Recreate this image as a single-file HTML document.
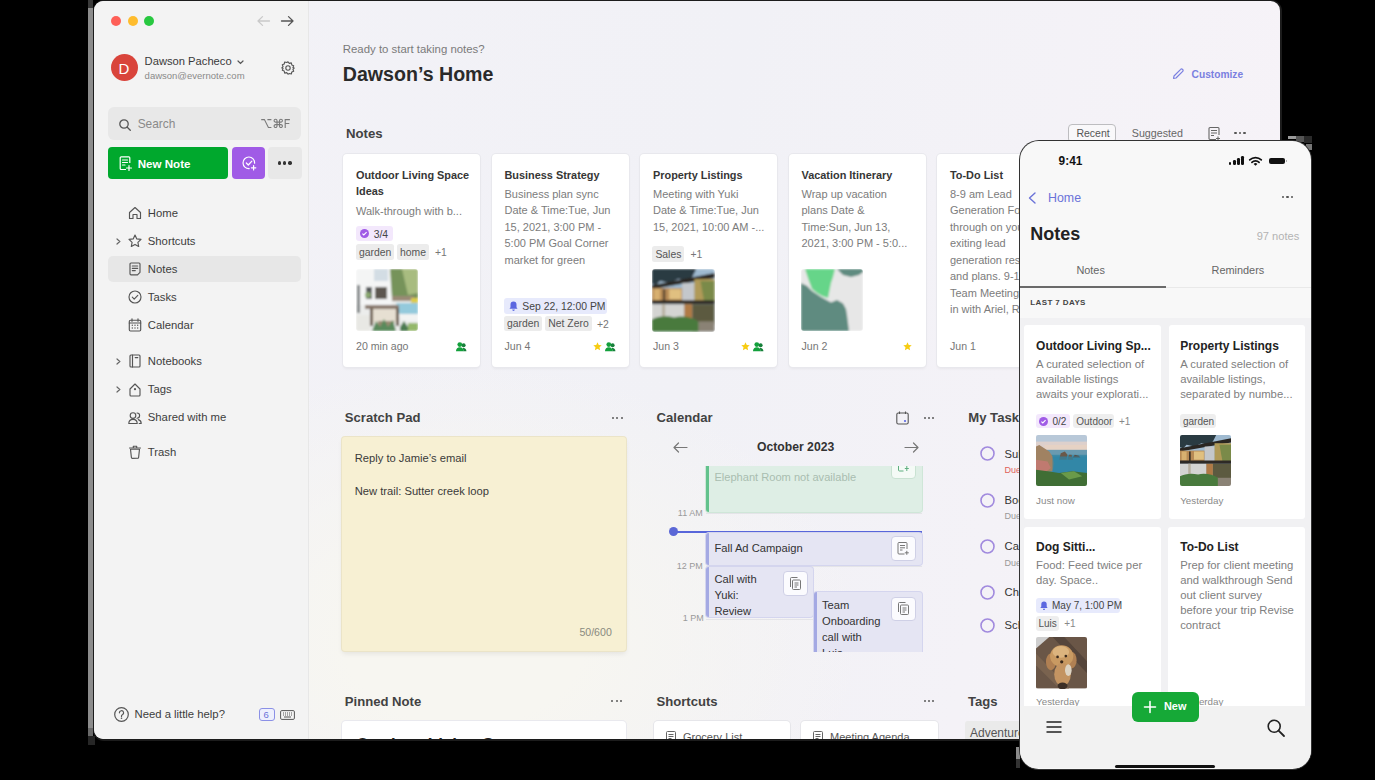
<!DOCTYPE html><html><head><meta charset="utf-8"><style>
*{margin:0;padding:0;box-sizing:border-box}
html,body{width:1375px;height:780px;overflow:hidden;background:#000}
body{position:relative;font-family:"Liberation Sans",sans-serif}
.a{position:absolute;white-space:nowrap}
svg.a{overflow:visible}
</style></head><body>

<div class="a" style="left:88.00px;top:0.00px;width:5.00px;height:8.00px;background:#3a3a3a"></div>
<div class="a" style="left:88.00px;top:8.00px;width:5.00px;height:720.00px;background:#8c8c8c"></div>
<div class="a" style="left:88.00px;top:728.00px;width:5.00px;height:8.00px;background:#6a6a6a"></div>
<div class="a" style="left:88.00px;top:736.00px;width:7.00px;height:9.00px;background:#262626"></div>
<div class="a" style="left:92.50px;top:-0.50px;width:1189.00px;height:741.00px;background:#1c1c1c;border-radius:11px"></div>
<div class="a" style="left:94.00px;top:1.00px;width:1186.00px;height:738.00px;border-radius:9.5px;background:radial-gradient(ellipse 400px 280px at 370px 640px,rgba(247,246,241,1) 30%,rgba(247,246,241,0)),linear-gradient(100deg,#f3f2f7 0%,#f1f1f6 50%,#f7f3f8 100%)"></div>
<div class="a" style="left:94.00px;top:1.00px;width:215.00px;height:738.00px;border-radius:9.5px 0 0 9.5px;background:#f3f3f3;border-right:1px solid #e7e7e7"></div>
<div class="a" style="left:0;top:0;width:1375px;height:739px;overflow:hidden">
<div class="a" style="left:111.10px;top:15.80px;width:10.20px;height:10.20px;border-radius:50%;background:#fe5f57"></div>
<div class="a" style="left:127.60px;top:15.80px;width:10.20px;height:10.20px;border-radius:50%;background:#febc2e"></div>
<div class="a" style="left:144.00px;top:15.80px;width:10.20px;height:10.20px;border-radius:50%;background:#28c840"></div>
<svg class="a" style="left:257.00px;top:16.00px;" width="13" height="10" viewBox="0 0 13 10"><path d="M12.5 5H1M5.5 0.6L1 5L5.5 9.4" stroke="#c9c9c9" stroke-width="1.3" fill="none" stroke-linecap="round" stroke-linejoin="round"/></svg>
<svg class="a" style="left:281.00px;top:16.00px;" width="13" height="10" viewBox="0 0 13 10"><path d="M0.5 5H12M7.5 0.6L12 5L7.5 9.4" stroke="#555" stroke-width="1.3" fill="none" stroke-linecap="round" stroke-linejoin="round"/></svg>
<div class="a" style="left:110.80px;top:53.80px;width:27.50px;height:27.50px;border-radius:50%;background:#d9443b"></div>
<div class="a" style="left:118.60px;top:60.50px;font-size:15px;line-height:15px;font-weight:400;color:#fff;">D</div>
<div class="a" style="left:144.60px;top:55.52px;font-size:11.2px;line-height:11.2px;font-weight:400;color:#3a3a3a;">Dawson Pacheco</div>
<svg class="a" style="left:236.50px;top:59.50px;" width="7" height="5" viewBox="0 0 7 5"><path d="M1 1L3.5 3.5L6 1" stroke="#555" stroke-width="1.2" fill="none" stroke-linecap="round"/></svg>
<div class="a" style="left:144.60px;top:70.76px;font-size:9.5px;line-height:9.5px;font-weight:400;color:#8a8a8a;">dawson@evernote.com</div>
<svg class="a" style="left:280.50px;top:61.00px;" width="14" height="14" viewBox="0 0 14 14"><g fill="none" stroke="#555" stroke-width="1.1"><path d="M7 0.8l1.3 1.6 2-.5.5 2 1.9.8-.8 1.9L13.2 7l-1.3 1.3.8 1.9-1.9.8-.5 2-2-.5L7 13.2l-1.3-1.6-2 .5-.5-2-1.9-.8.8-1.9L.8 7l1.3-1.3-.8-1.9 1.9-.8.5-2 2 .5z" stroke-linejoin="round"/><circle cx="7" cy="7" r="2.2"/></g></svg>
<div class="a" style="left:108.00px;top:107.00px;width:193.00px;height:33.00px;background:#e8e8e8;border-radius:6px"></div>
<svg class="a" style="left:118.50px;top:118.50px;" width="12" height="12" viewBox="0 0 12 12"><g fill="none" stroke="#555" stroke-width="1.3"><circle cx="5" cy="5" r="4.2"/><path d="M8 8L11.3 11.3" stroke-linecap="round"/></g></svg>
<div class="a" style="left:137.70px;top:118.73px;font-size:11.9px;line-height:11.9px;font-weight:400;color:#8a8a8a;">Search</div>
<svg class="a" style="left:261.00px;top:119.00px;" width="30" height="10" viewBox="0 0 30 10"><g fill="none" stroke="#7a7a7a" stroke-width="1.1"><path d="M0.2 0.6H3.4L7.4 8.5H10.4M6.4 0.6H10.4"/><path transform="translate(13,0.1)" d="M3 3V1.6A1.45 1.45 0 1 0 1.6 3H6.9A1.45 1.45 0 1 0 5.5 1.6V6.9A1.45 1.45 0 1 0 6.9 5.5H1.6A1.45 1.45 0 1 0 3 6.9Z"/><path d="M24.2 9V0.6H28.9M24.2 4.5H28.3"/></g></svg>
<div class="a" style="left:108.00px;top:147.00px;width:120.00px;height:32.40px;background:#00a82d;border-radius:4px"></div>
<svg class="a" style="left:119.00px;top:156.00px;" width="13" height="15" viewBox="0 0 13 15"><g fill="none" stroke="#fff" stroke-width="1.2"><path d="M7 13.5H2.2a1 1 0 0 1-1-1V1.8a1 1 0 0 1 1-1h7.6a1 1 0 0 1 1 1V7"/><path d="M3.5 4h5M3.5 6.5h5M3.5 9h2.5" stroke-linecap="round"/><path d="M10 9.5v5M7.5 12h5" stroke-linecap="round"/></g></svg>
<div class="a" style="left:137.70px;top:158.08px;font-size:11.6px;line-height:11.6px;font-weight:700;color:#fff;">New Note</div>
<div class="a" style="left:232.00px;top:147.00px;width:32.60px;height:32.40px;background:#a05be6;border-radius:4px"></div>
<svg class="a" style="left:240.50px;top:155.00px;" width="16" height="16" viewBox="0 0 16 16"><g fill="none" stroke="#fff" stroke-width="1.2" stroke-linecap="round" stroke-linejoin="round"><path d="M13.6 8.2A5.8 5.8 0 1 0 8.2 13.6"/><path d="M5.3 8l2 2 3.6-3.9"/><path d="M12.6 10.6v4.4M10.4 12.8h4.4"/></g></svg>
<div class="a" style="left:268.00px;top:147.00px;width:33.70px;height:32.40px;background:#e8e8e8;border-radius:4px"></div>
<div class="a" style="left:277.90px;top:161.40px;width:3.40px;height:3.40px;border-radius:50%;background:#333"></div>
<div class="a" style="left:283.10px;top:161.40px;width:3.40px;height:3.40px;border-radius:50%;background:#333"></div>
<div class="a" style="left:288.30px;top:161.40px;width:3.40px;height:3.40px;border-radius:50%;background:#333"></div>
<div class="a" style="left:108.00px;top:256.00px;width:193.00px;height:25.50px;background:#e7e7e7;border-radius:5px"></div>
<div class="a" style="left:147.80px;top:207.53px;font-size:11.3px;line-height:11.3px;font-weight:400;color:#3d3d3d;">Home</div>
<svg class="a" style="left:127.50px;top:206.00px;" width="14" height="14" viewBox="0 0 14 14"><path fill="none" stroke="#555" stroke-width="1.15" stroke-linejoin="round" stroke-linecap="round" d="M1.5 6.5L7 1.5L12.5 6.5V12.5H9V8.5H5V12.5H1.5Z"/></svg>
<div class="a" style="left:147.80px;top:235.53px;font-size:11.3px;line-height:11.3px;font-weight:400;color:#3d3d3d;">Shortcuts</div>
<svg class="a" style="left:127.50px;top:234.00px;" width="14" height="14" viewBox="0 0 14 14"><path fill="none" stroke="#555" stroke-width="1.15" stroke-linejoin="round" stroke-linecap="round" d="M7 1l1.8 3.9 4.2.5-3.1 2.9.8 4.2L7 10.4l-3.7 2.1.8-4.2L1 5.4l4.2-.5z"/></svg>
<svg class="a" style="left:115.80px;top:237.50px;" width="5" height="7" viewBox="0 0 5 7"><path d="M1 1L3.8 3.5L1 6" stroke="#666" stroke-width="1.2" fill="none" stroke-linecap="round"/></svg>
<div class="a" style="left:147.80px;top:263.53px;font-size:11.3px;line-height:11.3px;font-weight:400;color:#3d3d3d;">Notes</div>
<svg class="a" style="left:127.50px;top:262.00px;" width="14" height="14" viewBox="0 0 14 14"><g fill="none" stroke="#555" stroke-width="1.15" stroke-linejoin="round" stroke-linecap="round"><path d="M9.5 12.8H3a1 1 0 0 1-1-1V2a1 1 0 0 1 1-1h8a1 1 0 0 1 1 1v8.3z"/><path d="M4.3 4h5.4M4.3 6.3h5.4M4.3 8.6h3"/></g></svg>
<div class="a" style="left:147.80px;top:291.53px;font-size:11.3px;line-height:11.3px;font-weight:400;color:#3d3d3d;">Tasks</div>
<svg class="a" style="left:127.50px;top:290.00px;" width="14" height="14" viewBox="0 0 14 14"><g fill="none" stroke="#555" stroke-width="1.15" stroke-linejoin="round" stroke-linecap="round"><circle cx="7" cy="7" r="6"/><path d="M4.3 7.2l1.9 1.9 3.6-3.8"/></g></svg>
<div class="a" style="left:147.80px;top:319.53px;font-size:11.3px;line-height:11.3px;font-weight:400;color:#3d3d3d;">Calendar</div>
<svg class="a" style="left:127.50px;top:318.00px;" width="14" height="14" viewBox="0 0 14 14"><g fill="none" stroke="#555" stroke-width="1.15" stroke-linejoin="round" stroke-linecap="round"><rect x="1.3" y="2.2" width="11.4" height="10.8" rx="1.2"/><path d="M4 0.8v2.5M10 0.8v2.5M1.3 5h11.4"/></g><g fill="#555"><circle cx="4.3" cy="7.3" r=".7"/><circle cx="7" cy="7.3" r=".7"/><circle cx="9.7" cy="7.3" r=".7"/><circle cx="4.3" cy="10" r=".7"/><circle cx="7" cy="10" r=".7"/><circle cx="9.7" cy="10" r=".7"/></g></svg>
<div class="a" style="left:147.80px;top:355.53px;font-size:11.3px;line-height:11.3px;font-weight:400;color:#3d3d3d;">Notebooks</div>
<svg class="a" style="left:127.50px;top:354.00px;" width="14" height="14" viewBox="0 0 14 14"><g fill="none" stroke="#555" stroke-width="1.15" stroke-linejoin="round" stroke-linecap="round"><rect x="2" y="1" width="10" height="12" rx="1"/><path d="M4.5 1v12M7.2 3.6h2.6"/></g></svg>
<svg class="a" style="left:115.80px;top:357.50px;" width="5" height="7" viewBox="0 0 5 7"><path d="M1 1L3.8 3.5L1 6" stroke="#666" stroke-width="1.2" fill="none" stroke-linecap="round"/></svg>
<div class="a" style="left:147.80px;top:384.13px;font-size:11.3px;line-height:11.3px;font-weight:400;color:#3d3d3d;">Tags</div>
<svg class="a" style="left:127.50px;top:382.60px;" width="14" height="14" viewBox="0 0 14 14"><g fill="none" stroke="#555" stroke-width="1.15" stroke-linejoin="round" stroke-linecap="round"><path d="M2 6L7 1L12 6V12a1 1 0 0 1-1 1H3a1 1 0 0 1-1-1Z"/></g><circle cx="7" cy="6.2" r="1.1" fill="#555"/></svg>
<svg class="a" style="left:115.80px;top:386.10px;" width="5" height="7" viewBox="0 0 5 7"><path d="M1 1L3.8 3.5L1 6" stroke="#666" stroke-width="1.2" fill="none" stroke-linecap="round"/></svg>
<div class="a" style="left:147.80px;top:412.03px;font-size:11.3px;line-height:11.3px;font-weight:400;color:#3d3d3d;">Shared with me</div>
<svg class="a" style="left:127.50px;top:410.50px;" width="14" height="14" viewBox="0 0 14 14"><g fill="none" stroke="#555" stroke-width="1.15" stroke-linejoin="round" stroke-linecap="round"><circle cx="5" cy="4.5" r="2.8"/><path d="M0.8 12.5c0-2.5 1.8-4.2 4.2-4.2s4.2 1.7 4.2 4.2z"/><path d="M9 2a2.6 2.6 0 0 1 0 5.2M10.3 8.6c1.7.5 2.9 1.8 2.9 3.9h-2"/></g></svg>
<div class="a" style="left:147.80px;top:446.53px;font-size:11.3px;line-height:11.3px;font-weight:400;color:#3d3d3d;">Trash</div>
<svg class="a" style="left:127.50px;top:445.00px;" width="14" height="14" viewBox="0 0 14 14"><g fill="none" stroke="#555" stroke-width="1.15" stroke-linejoin="round" stroke-linecap="round"><path d="M2.5 4.2h9l-.9 8.3a.9.9 0 0 1-.9.8H4.3a.9.9 0 0 1-.9-.8z"/><path d="M1.5 3h11M5.3 3V1.2h3.4V3"/></g></svg>
<svg class="a" style="left:113.80px;top:707.00px;" width="15" height="15" viewBox="0 0 15 15"><circle cx="7.5" cy="7.5" r="6.8" fill="none" stroke="#555" stroke-width="1.2"/><path d="M5.4 5.8a2.1 2.1 0 1 1 3 1.9c-.6.3-.9.7-.9 1.4v.5" fill="none" stroke="#555" stroke-width="1.2" stroke-linecap="round"/><circle cx="7.5" cy="11.3" r=".8" fill="#555"/></svg>
<div class="a" style="left:134.50px;top:709.03px;font-size:11.3px;line-height:11.3px;font-weight:400;color:#3d3d3d;">Need a little help?</div>
<div class="a" style="left:258.50px;top:708.40px;width:16.10px;height:12.30px;border:1px solid #8b90e6;border-radius:3px;background:#eef0fd"></div>
<div class="a" style="left:263.60px;top:710.16px;font-size:9.5px;line-height:9.5px;font-weight:400;color:#6b72d8;">6</div>
<svg class="a" style="left:280.30px;top:709.70px;" width="15" height="10" viewBox="0 0 15 10"><rect x=".6" y=".6" width="13.8" height="8.8" rx="1.2" fill="none" stroke="#555" stroke-width="1"/><path d="M3 3h1M5 3h1M7 3h1M9 3h1M11 3h1M3 5h1M5 5h1M7 5h1M9 5h1M11 5h1M4 7h7" stroke="#555" stroke-width="1"/></svg>
<div class="a" style="left:342.80px;top:43.95px;font-size:11.4px;line-height:11.4px;font-weight:400;color:#7a7a7a;">Ready to start taking notes?</div>
<div class="a" style="left:342.80px;top:65.21px;font-size:19.6px;line-height:19.6px;font-weight:700;color:#2a2a2a;">Dawson’s Home</div>
<svg class="a" style="left:1172.00px;top:68.00px;" width="12" height="12" viewBox="0 0 12 12"><path d="M1.5 10.5L2 8L8.7 1.3a1.2 1.2 0 0 1 1.8 0l.2.2a1.2 1.2 0 0 1 0 1.8L4 10z" fill="none" stroke="#7a7fe0" stroke-width="1.2" stroke-linejoin="round"/></svg>
<div class="a" style="left:1191.60px;top:70.07px;font-size:10.2px;line-height:10.2px;font-weight:700;color:#7a7fe0;">Customize</div>
<div class="a" style="left:346.00px;top:126.83px;font-size:13.2px;line-height:13.2px;font-weight:700;color:#424242;">Notes</div>
<div class="a" style="left:1068.00px;top:123.60px;width:48.00px;height:19.00px;border:1px solid #bdbdc0;border-radius:4px;background:#f9f8fa"></div>
<div class="a" style="left:1076.40px;top:128.31px;font-size:10.5px;line-height:10.5px;font-weight:400;color:#555;">Recent</div>
<div class="a" style="left:1131.80px;top:128.14px;font-size:10.7px;line-height:10.7px;font-weight:400;color:#666;">Suggested</div>
<svg class="a" style="left:1207.60px;top:127.00px;" width="13" height="14" viewBox="0 0 13 14"><g fill="none" stroke="#666" stroke-width="1.1"><path d="M8 12.5H2a1 1 0 0 1-1-1V1.5a1 1 0 0 1 1-1h8a1 1 0 0 1 1 1V8"/><path d="M3 3.5h6M3 6h6M3 8.5h3M10 9.5v4M8 11.5h4"/></g></svg>
<div class="a" style="left:1234.20px;top:131.70px;width:2.60px;height:2.60px;border-radius:50%;background:#555"></div>
<div class="a" style="left:1238.80px;top:131.70px;width:2.60px;height:2.60px;border-radius:50%;background:#555"></div>
<div class="a" style="left:1243.40px;top:131.70px;width:2.60px;height:2.60px;border-radius:50%;background:#555"></div>
<div class="a" style="left:343.00px;top:154.00px;width:137.00px;height:213.00px;background:#fff;border-radius:4px;box-shadow:0 0 0 1px #e8e8ed,0 2px 3px rgba(0,0,0,.05)"></div>
<div class="a" style="left:491.50px;top:154.00px;width:137.00px;height:213.00px;background:#fff;border-radius:4px;box-shadow:0 0 0 1px #e8e8ed,0 2px 3px rgba(0,0,0,.05)"></div>
<div class="a" style="left:640.00px;top:154.00px;width:137.00px;height:213.00px;background:#fff;border-radius:4px;box-shadow:0 0 0 1px #e8e8ed,0 2px 3px rgba(0,0,0,.05)"></div>
<div class="a" style="left:788.50px;top:154.00px;width:137.00px;height:213.00px;background:#fff;border-radius:4px;box-shadow:0 0 0 1px #e8e8ed,0 2px 3px rgba(0,0,0,.05)"></div>
<div class="a" style="left:937.00px;top:154.00px;width:137.00px;height:213.00px;background:#fff;border-radius:4px;box-shadow:0 0 0 1px #e8e8ed,0 2px 3px rgba(0,0,0,.05)"></div>
<div class="a" style="left:356.00px;top:169.77px;font-size:10.9px;line-height:10.9px;font-weight:700;color:#363636;">Outdoor Living Space</div>
<div class="a" style="left:356.00px;top:186.27px;font-size:10.9px;line-height:10.9px;font-weight:700;color:#363636;">Ideas</div>
<div class="a" style="left:356.00px;top:205.69px;font-size:11px;line-height:11px;font-weight:400;color:#7c7c7c;">Walk-through with b...</div>
<div class="a" style="left:356.00px;top:226.00px;width:37.40px;height:15.00px;background:#f3e8fc;border-radius:3px"></div>
<svg class="a" style="left:360.00px;top:229.00px;" width="9" height="9" viewBox="0 0 9 9"><circle cx="4.5" cy="4.5" r="4.5" fill="#a05be6"/><path d="M2.4 4.6l1.4 1.4 2.8-2.8" stroke="#fff" stroke-width="1.1" fill="none"/></svg>
<div class="a" style="left:373.70px;top:229.60px;font-size:10.4px;line-height:10.4px;font-weight:400;color:#444;">3/4</div>
<div class="a" style="left:356.00px;top:243.80px;width:38.30px;height:16.20px;background:#ececec;border-radius:2.5px"></div>
<div class="a" style="left:359.00px;top:247.80px;font-size:10.4px;line-height:10.4px;font-weight:400;color:#555;">garden</div>
<div class="a" style="left:397.00px;top:243.80px;width:32.40px;height:16.20px;background:#ececec;border-radius:2.5px"></div>
<div class="a" style="left:400.00px;top:247.80px;font-size:10.4px;line-height:10.4px;font-weight:400;color:#555;">home</div>
<div class="a" style="left:435.00px;top:247.50px;font-size:10.4px;line-height:10.4px;font-weight:400;color:#777;">+1</div>
<svg class="a" style="left:356.00px;top:269.00px;overflow:hidden;border-radius:3px" width="62" height="62" viewBox="0 0 62 62"><defs><filter id="bl1" x="-5%" y="-5%" width="110%" height="110%"><feGaussianBlur stdDeviation="0.9"/></filter></defs><g filter="url(#bl1)"><rect width="62" height="62" fill="#ecedec"/><rect x="0" y="0" width="36" height="36" fill="#f4f5f5"/><rect x="18" y="0" width="14" height="12" fill="#d3dde4"/><rect x="1" y="16" width="3" height="28" fill="#7c8082"/><rect x="10" y="18" width="6" height="12" fill="#55585a"/><rect x="19" y="18" width="12" height="12" fill="#5c5650"/><circle cx="12" cy="26" r="3" fill="#8aa870"/><path d="M34 0H62V30H36Z" fill="#76935a"/><path d="M46 0H62V24L52 26Z" fill="#a8bc80"/><rect x="36" y="27" width="22" height="5" fill="#9a8a76"/><rect x="55" y="29" width="7" height="6" fill="#dccc4a"/><path d="M40 34H62V46H44Z" fill="#94cadc"/><path d="M42 45H62V52H46Z" fill="#f2f3f2"/><rect x="9" y="36" width="34" height="4" fill="#8a7a6e"/><rect x="16" y="40" width="26" height="14" fill="#e6dfd2"/><rect x="14" y="39" width="3" height="18" fill="#6a5a4c"/><rect x="40" y="39" width="3" height="18" fill="#6a5a4c"/><rect x="22" y="52" width="16" height="8" fill="#9a8a72"/><path d="M16 62L20 52 24 58 28 50 32 58 37 51 40 62Z" fill="#5a8a5c"/><path d="M44 58L48 52 52 58 54 62H44Z" fill="#4c7a50"/><rect x="52" y="54" width="10" height="8" fill="#94b86a"/><rect x="0" y="46" width="14" height="16" fill="#e8e8e4"/></g></svg>
<div class="a" style="left:356.00px;top:341.03px;font-size:10.6px;line-height:10.6px;font-weight:400;color:#767676;">20 min ago</div>
<svg class="a" style="left:456.30px;top:342.00px;" width="11" height="9.5" viewBox="0 0 11 9.5"><circle cx="7.6" cy="3.3" r="2" fill="#17803a"/><path d="M6.8 5.8C8.8 5.8 10.4 7 10.4 9.2H7.5Z" fill="#17803a"/><circle cx="3.8" cy="2.6" r="2.4" fill="#13a03c"/><path d="M0 9.2C0 6.6 1.6 5.2 3.8 5.2S7.6 6.6 7.6 9.2Z" fill="#13a03c"/></svg>
<div class="a" style="left:504.50px;top:169.77px;font-size:10.9px;line-height:10.9px;font-weight:700;color:#363636;">Business Strategy</div>
<div class="a" style="left:504.50px;top:188.69px;font-size:11px;line-height:11px;font-weight:400;color:#7c7c7c;">Business plan sync</div>
<div class="a" style="left:504.50px;top:205.19px;font-size:11px;line-height:11px;font-weight:400;color:#7c7c7c;">Date &amp; Time:Tue, Jun</div>
<div class="a" style="left:504.50px;top:221.69px;font-size:11px;line-height:11px;font-weight:400;color:#7c7c7c;">15, 2021, 3:00 PM -</div>
<div class="a" style="left:504.50px;top:238.19px;font-size:11px;line-height:11px;font-weight:400;color:#7c7c7c;">5:00 PM Goal Corner</div>
<div class="a" style="left:504.50px;top:254.69px;font-size:11px;line-height:11px;font-weight:400;color:#7c7c7c;">market for green</div>
<div class="a" style="left:504.00px;top:297.80px;width:103.30px;height:15.90px;background:#e7eafc;border-radius:3px"></div>
<svg class="a" style="left:508.50px;top:301.00px;" width="9" height="10" viewBox="0 0 9 10"><path d="M4.5 .6a3 3 0 0 1 3 3v2.7l1 1.5H.5l1-1.5V3.6a3 3 0 0 1 3-3z M3.2 8.6a1.3 1.3 0 0 0 2.6 0z" fill="#5b67e0"/></svg>
<div class="a" style="left:522.30px;top:301.50px;font-size:10.4px;line-height:10.4px;font-weight:400;color:#444;">Sep 22, 12:00 PM</div>
<div class="a" style="left:504.00px;top:316.00px;width:38.40px;height:15.40px;background:#ececec;border-radius:2.5px"></div>
<div class="a" style="left:507.00px;top:319.20px;font-size:10.4px;line-height:10.4px;font-weight:400;color:#555;">garden</div>
<div class="a" style="left:545.30px;top:316.00px;width:47.20px;height:15.40px;background:#ececec;border-radius:2.5px"></div>
<div class="a" style="left:548.30px;top:319.20px;font-size:10.4px;line-height:10.4px;font-weight:400;color:#555;">Net Zero</div>
<div class="a" style="left:597.00px;top:319.50px;font-size:10.4px;line-height:10.4px;font-weight:400;color:#777;">+2</div>
<div class="a" style="left:504.50px;top:341.03px;font-size:10.6px;line-height:10.6px;font-weight:400;color:#767676;">Jun 4</div>
<svg class="a" style="left:592.70px;top:341.50px;" width="9" height="9" viewBox="0 0 9 9"><path d="M4.5 .3l1.25 2.7 2.95.35-2.2 2 .6 2.95L4.5 6.8 1.9 8.3l.6-2.95-2.2-2 2.95-.35z" fill="#f7cc12"/></svg>
<svg class="a" style="left:605.30px;top:342.00px;" width="11" height="9.5" viewBox="0 0 11 9.5"><circle cx="7.6" cy="3.3" r="2" fill="#17803a"/><path d="M6.8 5.8C8.8 5.8 10.4 7 10.4 9.2H7.5Z" fill="#17803a"/><circle cx="3.8" cy="2.6" r="2.4" fill="#13a03c"/><path d="M0 9.2C0 6.6 1.6 5.2 3.8 5.2S7.6 6.6 7.6 9.2Z" fill="#13a03c"/></svg>
<div class="a" style="left:653.00px;top:169.77px;font-size:10.9px;line-height:10.9px;font-weight:700;color:#363636;">Property Listings</div>
<div class="a" style="left:653.00px;top:188.69px;font-size:11px;line-height:11px;font-weight:400;color:#7c7c7c;">Meeting with Yuki</div>
<div class="a" style="left:653.00px;top:205.19px;font-size:11px;line-height:11px;font-weight:400;color:#7c7c7c;">Date &amp; Time:Tue, Jun</div>
<div class="a" style="left:653.00px;top:221.69px;font-size:11px;line-height:11px;font-weight:400;color:#7c7c7c;">15, 2021, 10:00 AM -...</div>
<div class="a" style="left:652.40px;top:246.00px;width:32.00px;height:16.40px;background:#ececec;border-radius:2.5px"></div>
<div class="a" style="left:655.40px;top:250.20px;font-size:10.4px;line-height:10.4px;font-weight:400;color:#555;">Sales</div>
<div class="a" style="left:690.50px;top:249.80px;font-size:10.4px;line-height:10.4px;font-weight:400;color:#777;">+1</div>
<svg class="a" style="left:652.00px;top:269.00px;overflow:hidden;border-radius:3px" width="62.5" height="62.5" viewBox="0 0 62 62"><defs><filter id="bl2" x="-5%" y="-5%" width="110%" height="110%"><feGaussianBlur stdDeviation="0.9"/></filter></defs><g filter="url(#bl2)"><rect width="62" height="62" fill="#9fbad0"/><path d="M0 0H44L40 8 34 12 26 10 18 14 8 12 4 16 0 15Z" fill="#2c3a42"/><path d="M0 16L62 4V9L0 20Z" fill="#2a2824"/><rect x="0" y="19" width="30" height="13" fill="#b78a55"/><rect x="2" y="20" width="6" height="11" fill="#d8b070"/><rect x="17" y="20" width="12" height="10" fill="#e0c080"/><rect x="11" y="20" width="2" height="12" fill="#3a3026"/><rect x="30" y="14" width="12" height="18" fill="#c4c7cb"/><rect x="42" y="10" width="20" height="22" fill="#b09a58"/><path d="M48 12H62V34H52Z" fill="#7a8a48"/><rect x="0" y="31" width="62" height="4" fill="#2e2a26"/><rect x="0" y="35" width="32" height="16" fill="#d4d4d2"/><rect x="10" y="35" width="3" height="16" fill="#b8b0a0"/><rect x="32" y="35" width="8" height="14" fill="#b07a44"/><rect x="40" y="35" width="22" height="20" fill="#5c5a40"/><rect x="40" y="52" width="22" height="10" fill="#8a8274"/><path d="M0 62V50C6 47 14 46 22 48 30 46 40 48 46 52V62Z" fill="#4a7a3c"/></g></svg>
<div class="a" style="left:653.00px;top:341.03px;font-size:10.6px;line-height:10.6px;font-weight:400;color:#767676;">Jun 3</div>
<svg class="a" style="left:741.20px;top:341.50px;" width="9" height="9" viewBox="0 0 9 9"><path d="M4.5 .3l1.25 2.7 2.95.35-2.2 2 .6 2.95L4.5 6.8 1.9 8.3l.6-2.95-2.2-2 2.95-.35z" fill="#f7cc12"/></svg>
<svg class="a" style="left:752.80px;top:342.00px;" width="11" height="9.5" viewBox="0 0 11 9.5"><circle cx="7.6" cy="3.3" r="2" fill="#17803a"/><path d="M6.8 5.8C8.8 5.8 10.4 7 10.4 9.2H7.5Z" fill="#17803a"/><circle cx="3.8" cy="2.6" r="2.4" fill="#13a03c"/><path d="M0 9.2C0 6.6 1.6 5.2 3.8 5.2S7.6 6.6 7.6 9.2Z" fill="#13a03c"/></svg>
<div class="a" style="left:801.50px;top:169.77px;font-size:10.9px;line-height:10.9px;font-weight:700;color:#363636;">Vacation Itinerary</div>
<div class="a" style="left:801.50px;top:188.69px;font-size:11px;line-height:11px;font-weight:400;color:#7c7c7c;">Wrap up vacation</div>
<div class="a" style="left:801.50px;top:205.19px;font-size:11px;line-height:11px;font-weight:400;color:#7c7c7c;">plans Date &amp;</div>
<div class="a" style="left:801.50px;top:221.69px;font-size:11px;line-height:11px;font-weight:400;color:#7c7c7c;">Time:Sun, Jun 13,</div>
<div class="a" style="left:801.50px;top:238.19px;font-size:11px;line-height:11px;font-weight:400;color:#7c7c7c;">2021, 3:00 PM - 5:0...</div>
<svg class="a" style="left:801.00px;top:269.00px;overflow:hidden;border-radius:3px" width="62" height="62" viewBox="0 0 62 62"><defs><filter id="bl3" x="-5%" y="-5%" width="110%" height="110%"><feGaussianBlur stdDeviation="0.9"/></filter></defs><g filter="url(#bl3)"><rect width="62" height="62" fill="#e7e7e7"/><path d="M0 14L6 17 11 22 20 28 30 33.5 36 31 42 34.5 45 40 46 46 47 54 48 62H0Z" fill="#5e8b80"/><path d="M36 0H62V3L58 6 50 8 42 6Z" fill="#5e8b80"/><path d="M4 0H34L32 8 30 14 29 19 27 29 21 27 16 24 11 20 8 12Z" fill="#66d589"/></g></svg>
<div class="a" style="left:801.50px;top:341.03px;font-size:10.6px;line-height:10.6px;font-weight:400;color:#767676;">Jun 2</div>
<svg class="a" style="left:903.20px;top:341.50px;" width="9" height="9" viewBox="0 0 9 9"><path d="M4.5 .3l1.25 2.7 2.95.35-2.2 2 .6 2.95L4.5 6.8 1.9 8.3l.6-2.95-2.2-2 2.95-.35z" fill="#f7cc12"/></svg>
<div class="a" style="left:950.00px;top:169.77px;font-size:10.9px;line-height:10.9px;font-weight:700;color:#363636;">To-Do List</div>
<div class="a" style="left:950.00px;top:188.69px;font-size:11px;line-height:11px;font-weight:400;color:#7c7c7c;">8-9 am Lead</div>
<div class="a" style="left:950.00px;top:205.19px;font-size:11px;line-height:11px;font-weight:400;color:#7c7c7c;">Generation Follow</div>
<div class="a" style="left:950.00px;top:221.69px;font-size:11px;line-height:11px;font-weight:400;color:#7c7c7c;">through on your</div>
<div class="a" style="left:950.00px;top:238.19px;font-size:11px;line-height:11px;font-weight:400;color:#7c7c7c;">exiting lead</div>
<div class="a" style="left:950.00px;top:254.69px;font-size:11px;line-height:11px;font-weight:400;color:#7c7c7c;">generation research</div>
<div class="a" style="left:950.00px;top:271.19px;font-size:11px;line-height:11px;font-weight:400;color:#7c7c7c;">and plans. 9-10am</div>
<div class="a" style="left:950.00px;top:287.69px;font-size:11px;line-height:11px;font-weight:400;color:#7c7c7c;">Team Meeting</div>
<div class="a" style="left:950.00px;top:304.19px;font-size:11px;line-height:11px;font-weight:400;color:#7c7c7c;">in with Ariel, R</div>
<div class="a" style="left:950.00px;top:341.03px;font-size:10.6px;line-height:10.6px;font-weight:400;color:#767676;">Jun 1</div>
<div class="a" style="left:344.80px;top:411.41px;font-size:13.1px;line-height:13.1px;font-weight:700;color:#424242;">Scratch Pad</div>
<div class="a" style="left:612.00px;top:416.50px;width:2.10px;height:2.10px;border-radius:50%;background:#5a5a5a"></div>
<div class="a" style="left:616.30px;top:416.50px;width:2.10px;height:2.10px;border-radius:50%;background:#5a5a5a"></div>
<div class="a" style="left:620.60px;top:416.50px;width:2.10px;height:2.10px;border-radius:50%;background:#5a5a5a"></div>
<div class="a" style="left:341.60px;top:437.30px;width:284.70px;height:214.10px;background:#f7f0d3;border-radius:3px;box-shadow:0 0 0 1px #ebe4c8,0 3px 5px rgba(0,0,0,.07)"></div>
<div class="a" style="left:354.70px;top:453.22px;font-size:11.2px;line-height:11.2px;font-weight:400;color:#3a3a3a;">Reply to Jamie’s email</div>
<div class="a" style="left:354.70px;top:486.02px;font-size:11.2px;line-height:11.2px;font-weight:400;color:#3a3a3a;">New trail: Sutter creek loop</div>
<div class="a" style="left:579.40px;top:627.03px;font-size:10.6px;line-height:10.6px;font-weight:400;color:#8a8a80;">50/600</div>
<div class="a" style="left:656.60px;top:411.41px;font-size:13.1px;line-height:13.1px;font-weight:700;color:#424242;">Calendar</div>
<div class="a" style="left:923.80px;top:416.50px;width:2.10px;height:2.10px;border-radius:50%;background:#5a5a5a"></div>
<div class="a" style="left:928.10px;top:416.50px;width:2.10px;height:2.10px;border-radius:50%;background:#5a5a5a"></div>
<div class="a" style="left:932.40px;top:416.50px;width:2.10px;height:2.10px;border-radius:50%;background:#5a5a5a"></div>
<svg class="a" style="left:896.00px;top:410.50px;" width="13" height="14" viewBox="0 0 13 14"><g fill="none" stroke="#555" stroke-width="1.1"><rect x=".8" y="2" width="11.4" height="11" rx="1.5"/><path d="M3.5 .5v2.5M9.5 .5v2.5"/></g><circle cx="9" cy="10" r="1.1" fill="#5b67e0"/></svg>
<div class="a" style="left:757.00px;top:441.07px;font-size:12.2px;line-height:12.2px;font-weight:700;color:#333;">October 2023</div>
<svg class="a" style="left:672.50px;top:441.50px;" width="15" height="11" viewBox="0 0 15 11"><path d="M14 5.5H1M5.5 1L1 5.5L5.5 10" stroke="#777" stroke-width="1.2" fill="none" stroke-linecap="round" stroke-linejoin="round"/></svg>
<svg class="a" style="left:904.00px;top:441.50px;" width="15" height="11" viewBox="0 0 15 11"><path d="M1 5.5H14M9.5 1L14 5.5L9.5 10" stroke="#777" stroke-width="1.2" fill="none" stroke-linecap="round" stroke-linejoin="round"/></svg>
<div class="a" style="left:660px;top:465.5px;width:270px;height:186px;overflow:hidden">
<div class="a" style="left:45.60px;top:47.50px;width:216.00px;height:1.00px;background:#e4e4e8"></div>
<div class="a" style="left:45.60px;top:100.50px;width:216.00px;height:1.00px;background:#e4e4e8"></div>
<div class="a" style="left:45.60px;top:153.50px;width:216.00px;height:1.00px;background:#e4e4e8"></div>
<div class="a" style="left:17.80px;top:43.08px;font-size:9px;line-height:9px;font-weight:400;color:#9a9a9a;">11 AM</div>
<div class="a" style="left:16.70px;top:96.08px;font-size:9px;line-height:9px;font-weight:400;color:#9a9a9a;">12 PM</div>
<div class="a" style="left:22.70px;top:148.88px;font-size:9px;line-height:9px;font-weight:400;color:#9a9a9a;">1 PM</div>
<div class="a" style="left:45.60px;top:-25.50px;width:216.10px;height:72.00px;background:#deeee5;border-left:3px solid #62c28c;border-radius:3px;box-shadow:0 0 0 1px #cfe6d8"></div>
<div class="a" style="left:54.40px;top:6.50px;font-size:11.1px;line-height:11.1px;font-weight:400;color:#a9bdb0;">Elephant Room not available</div>
<div class="a" style="left:231.00px;top:-15.50px;width:25.40px;height:29.00px;background:#f4faf6;border:1px solid #c9e2d2;border-radius:4px"></div>
<svg class="a" style="left:237.00px;top:0.50px;" width="13" height="13" viewBox="0 0 13 13"><g fill="none" stroke="#5fae80" stroke-width="1"><path d="M1.5 0V4a1 1 0 0 0 1 1h4"/><path d="M9.8 0v5M7.8 2.5h4"/></g></svg>
<div class="a" style="left:13.90px;top:65.10px;width:248.00px;height:2.40px;background:#5866da"></div>
<div class="a" style="left:9.40px;top:61.80px;width:9.00px;height:9.00px;background:#5b67d6;border-radius:50%"></div>
<div class="a" style="left:45.60px;top:67.70px;width:216.10px;height:31.80px;background:#e5e5f3;border-left:3px solid #a4a9e3;border-radius:3px;box-shadow:0 0 0 1px #d4d5ee"></div>
<div class="a" style="left:54.40px;top:77.62px;font-size:11.2px;line-height:11.2px;font-weight:400;color:#333;">Fall Ad Campaign</div>
<div class="a" style="left:231.00px;top:70.50px;width:25.40px;height:24.70px;background:#fbfbfe;border:1px solid #cfd0e6;border-radius:4px"></div>
<svg class="a" style="left:237.20px;top:76.30px;" width="13" height="13" viewBox="0 0 13 13"><g fill="none" stroke="#777" stroke-width="1"><path d="M7.5 12H2a1 1 0 0 1-1-1V1.5a1 1 0 0 1 1-1h7a1 1 0 0 1 1 1V7"/><path d="M3 3.5h5M3 5.8h5M3 8h2.5M9.8 8.8v4M7.8 10.8h4"/></g></svg>
<div class="a" style="left:45.60px;top:101.20px;width:107.40px;height:50.30px;background:#e5e5f3;border-left:3px solid #a4a9e3;border-radius:3px;box-shadow:0 0 0 1px #d4d5ee"></div>
<div class="a" style="left:54.40px;top:108.22px;font-size:11.2px;line-height:11.2px;font-weight:400;color:#333;">Call with</div>
<div class="a" style="left:54.40px;top:124.42px;font-size:11.2px;line-height:11.2px;font-weight:400;color:#333;">Yuki:</div>
<div class="a" style="left:54.40px;top:140.62px;font-size:11.2px;line-height:11.2px;font-weight:400;color:#333;">Review</div>
<div class="a" style="left:123.00px;top:105.50px;width:25.40px;height:24.70px;background:#fbfbfe;border:1px solid #cfd0e6;border-radius:4px"></div>
<svg class="a" style="left:129.20px;top:111.30px;" width="13" height="13" viewBox="0 0 13 13"><g fill="none" stroke="#777" stroke-width="1"><rect x="3.5" y="3" width="8" height="9.5" rx="1"/><path d="M1.5 10V1.5a1 1 0 0 1 1-1h6"/><path d="M5.5 6h4M5.5 8h4M5.5 10h2.5"/></g></svg>
<div class="a" style="left:154.20px;top:126.20px;width:107.50px;height:80.00px;background:#e5e5f3;border-left:3px solid #a4a9e3;border-radius:3px;box-shadow:0 0 0 1px #d4d5ee"></div>
<div class="a" style="left:162.00px;top:134.02px;font-size:11.2px;line-height:11.2px;font-weight:400;color:#333;">Team</div>
<div class="a" style="left:162.00px;top:150.22px;font-size:11.2px;line-height:11.2px;font-weight:400;color:#333;">Onboarding</div>
<div class="a" style="left:162.00px;top:166.42px;font-size:11.2px;line-height:11.2px;font-weight:400;color:#333;">call with</div>
<div class="a" style="left:162.00px;top:182.62px;font-size:11.2px;line-height:11.2px;font-weight:400;color:#333;">Luis</div>
<div class="a" style="left:231.00px;top:131.10px;width:25.40px;height:24.70px;background:#fbfbfe;border:1px solid #cfd0e6;border-radius:4px"></div>
<svg class="a" style="left:237.20px;top:136.90px;" width="13" height="13" viewBox="0 0 13 13"><g fill="none" stroke="#777" stroke-width="1"><rect x="3.5" y="3" width="8" height="9.5" rx="1"/><path d="M1.5 10V1.5a1 1 0 0 1 1-1h6"/><path d="M5.5 6h4M5.5 8h4M5.5 10h2.5"/></g></svg>
</div>
<div class="a" style="left:968.30px;top:411.41px;font-size:13.1px;line-height:13.1px;font-weight:700;color:#424242;">My Tasks</div>
<svg class="a" style="left:980.20px;top:446.40px;" width="15" height="15" viewBox="0 0 15 15"><circle cx="7.5" cy="7.5" r="6.5" fill="none" stroke="#a18ade" stroke-width="1.6"/></svg>
<svg class="a" style="left:980.20px;top:492.50px;" width="15" height="15" viewBox="0 0 15 15"><circle cx="7.5" cy="7.5" r="6.5" fill="none" stroke="#a18ade" stroke-width="1.6"/></svg>
<svg class="a" style="left:980.20px;top:539.00px;" width="15" height="15" viewBox="0 0 15 15"><circle cx="7.5" cy="7.5" r="6.5" fill="none" stroke="#a18ade" stroke-width="1.6"/></svg>
<svg class="a" style="left:980.20px;top:584.90px;" width="15" height="15" viewBox="0 0 15 15"><circle cx="7.5" cy="7.5" r="6.5" fill="none" stroke="#a18ade" stroke-width="1.6"/></svg>
<svg class="a" style="left:980.20px;top:618.30px;" width="15" height="15" viewBox="0 0 15 15"><circle cx="7.5" cy="7.5" r="6.5" fill="none" stroke="#a18ade" stroke-width="1.6"/></svg>
<div class="a" style="left:1004.60px;top:448.52px;font-size:11.2px;line-height:11.2px;font-weight:400;color:#333;">Submit report</div>
<div class="a" style="left:1004.60px;top:466.38px;font-size:9px;line-height:9px;font-weight:400;color:#e0625a;">Due today</div>
<div class="a" style="left:1004.60px;top:494.52px;font-size:11.2px;line-height:11.2px;font-weight:400;color:#333;">Book flights</div>
<div class="a" style="left:1004.60px;top:512.38px;font-size:9px;line-height:9px;font-weight:400;color:#999;">Due tomorrow</div>
<div class="a" style="left:1004.60px;top:541.02px;font-size:11.2px;line-height:11.2px;font-weight:400;color:#333;">Call plumber</div>
<div class="a" style="left:1004.60px;top:558.88px;font-size:9px;line-height:9px;font-weight:400;color:#999;">Due Friday</div>
<div class="a" style="left:1004.60px;top:586.82px;font-size:11.2px;line-height:11.2px;font-weight:400;color:#333;">Check in</div>
<div class="a" style="left:1004.60px;top:620.32px;font-size:11.2px;line-height:11.2px;font-weight:400;color:#333;">Schedule</div>
<div class="a" style="left:344.80px;top:694.91px;font-size:13.1px;line-height:13.1px;font-weight:700;color:#424242;">Pinned Note</div>
<div class="a" style="left:611.40px;top:700.00px;width:2.10px;height:2.10px;border-radius:50%;background:#5a5a5a"></div>
<div class="a" style="left:615.70px;top:700.00px;width:2.10px;height:2.10px;border-radius:50%;background:#5a5a5a"></div>
<div class="a" style="left:620.00px;top:700.00px;width:2.10px;height:2.10px;border-radius:50%;background:#5a5a5a"></div>
<div class="a" style="left:342.20px;top:721.20px;width:283.50px;height:40.00px;background:#fff;border-radius:4px;box-shadow:0 0 0 1px #e9e9ee"></div>
<div class="a" style="left:356.00px;top:735.61px;font-size:17px;line-height:17px;font-weight:700;color:#222;">Outdoor Living S</div>
<div class="a" style="left:656.50px;top:694.91px;font-size:13.1px;line-height:13.1px;font-weight:700;color:#424242;">Shortcuts</div>
<div class="a" style="left:923.80px;top:700.00px;width:2.10px;height:2.10px;border-radius:50%;background:#5a5a5a"></div>
<div class="a" style="left:928.10px;top:700.00px;width:2.10px;height:2.10px;border-radius:50%;background:#5a5a5a"></div>
<div class="a" style="left:932.40px;top:700.00px;width:2.10px;height:2.10px;border-radius:50%;background:#5a5a5a"></div>
<div class="a" style="left:654.00px;top:721.00px;width:136.00px;height:30.00px;background:#fff;border-radius:4px;box-shadow:0 0 0 1px #e6e6ea"></div>
<div class="a" style="left:801.00px;top:721.00px;width:137.00px;height:30.00px;background:#fff;border-radius:4px;box-shadow:0 0 0 1px #e6e6ea"></div>
<svg class="a" style="left:666.00px;top:731.00px;" width="10" height="11" viewBox="0 0 10 11"><g fill="none" stroke="#666" stroke-width="1"><rect x=".5" y=".5" width="9" height="10" rx="1"/><path d="M2.5 3.5h5M2.5 5.5h5M2.5 7.5h3"/></g></svg>
<div class="a" style="left:683.00px;top:731.69px;font-size:11px;line-height:11px;font-weight:400;color:#555;">Grocery List</div>
<svg class="a" style="left:813.00px;top:731.00px;" width="10" height="11" viewBox="0 0 10 11"><g fill="none" stroke="#666" stroke-width="1"><rect x=".5" y=".5" width="9" height="10" rx="1"/><path d="M2.5 3.5h5M2.5 5.5h5M2.5 7.5h3"/></g></svg>
<div class="a" style="left:830.00px;top:731.69px;font-size:11px;line-height:11px;font-weight:400;color:#555;">Meeting Agenda</div>
<div class="a" style="left:968.00px;top:694.91px;font-size:13.1px;line-height:13.1px;font-weight:700;color:#424242;">Tags</div>
<div class="a" style="left:965.00px;top:720.50px;width:60.00px;height:22.00px;background:#eaeaea;border-radius:3px"></div>
<div class="a" style="left:970.00px;top:727.34px;font-size:12px;line-height:12px;font-weight:400;color:#555;">Adventure</div>
</div>
<div class="a" style="left:1288.00px;top:136.00px;width:8.00px;height:3.00px;background:#9a9a9a"></div>
<div class="a" style="left:1296.00px;top:136.00px;width:8.00px;height:6.00px;background:#555"></div>
<div class="a" style="left:1304.00px;top:136.00px;width:8.00px;height:7.00px;background:#2a2a2a"></div>
<div class="a" style="left:1306.00px;top:144.00px;width:6.00px;height:6.00px;background:#777"></div>
<div class="a" style="left:1016.00px;top:747.00px;width:4.00px;height:12.00px;background:#8a8a8a"></div>
<div class="a" style="left:1016.00px;top:759.00px;width:4.00px;height:9.00px;background:#333"></div>
<div class="a" style="left:1018.60px;top:140.00px;width:293.60px;height:630.20px;background:#333;border-radius:20px"></div>
<div class="a" style="left:1019.9px;top:141.3px;width:291px;height:627.5px;border-radius:18.7px;overflow:hidden;background:#f8f8f8">
<div class="a" style="left:38.70px;top:14.83px;font-size:11.9px;line-height:11.9px;font-weight:700;color:#111;">9:41</div>
<div class="a" style="left:209.10px;top:20.70px;width:2.50px;height:3.40px;background:#111;border-radius:1.2px"></div>
<div class="a" style="left:213.15px;top:19.10px;width:2.50px;height:5.00px;background:#111;border-radius:1.2px"></div>
<div class="a" style="left:217.20px;top:17.10px;width:2.50px;height:7.00px;background:#111;border-radius:1.2px"></div>
<div class="a" style="left:221.25px;top:15.10px;width:2.50px;height:9.00px;background:#111;border-radius:1.2px"></div>
<svg class="a" style="left:229.50px;top:14.90px;" width="13" height="10" viewBox="0 0 13 10"><g fill="none" stroke="#111" stroke-width="1.7" stroke-linecap="round"><path d="M0.7 3.9A8.3 8.3 0 0 1 12.3 3.9"/><path d="M2.9 6.3A5.1 5.1 0 0 1 10.1 6.3"/></g><path d="M6.5 9.8L4.6 7.9A2.7 2.7 0 0 1 8.4 7.9Z" fill="#111"/></svg>
<div class="a" style="left:249.30px;top:16.70px;width:15.60px;height:6.00px;background:#111;border-radius:2px"></div>
<div class="a" style="left:265.70px;top:18.50px;width:1.20px;height:2.60px;background:#999;border-radius:0 1px 1px 0"></div>
<svg class="a" style="left:8.60px;top:50.70px;" width="8" height="12" viewBox="0 0 8 12"><path d="M7 1L1.5 6L7 11" stroke="#6b73d8" stroke-width="1.4" fill="none" stroke-linecap="round" stroke-linejoin="round"/></svg>
<div class="a" style="left:28.10px;top:50.30px;font-size:12.4px;line-height:12.4px;font-weight:400;color:#6b73d8;">Home</div>
<div class="a" style="left:261.70px;top:54.50px;width:2.60px;height:2.60px;border-radius:50%;background:#555"></div>
<div class="a" style="left:266.30px;top:54.50px;width:2.60px;height:2.60px;border-radius:50%;background:#555"></div>
<div class="a" style="left:270.90px;top:54.50px;width:2.60px;height:2.60px;border-radius:50%;background:#555"></div>
<div class="a" style="left:10.30px;top:83.46px;font-size:18px;line-height:18px;font-weight:700;color:#222;">Notes</div>
<div class="a" style="left:236.80px;top:89.60px;font-size:11.1px;line-height:11.1px;font-weight:400;color:#b3b3b3;">97 notes</div>
<div class="a" style="left:56.50px;top:123.47px;font-size:10.9px;line-height:10.9px;font-weight:400;color:#666;">Notes</div>
<div class="a" style="left:191.70px;top:123.47px;font-size:10.9px;line-height:10.9px;font-weight:400;color:#666;">Reminders</div>
<div class="a" style="left:-0.40px;top:145.70px;width:292.00px;height:1.00px;background:#e9e9e9"></div>
<div class="a" style="left:-0.40px;top:145.20px;width:146.00px;height:1.60px;background:#6a6a6a"></div>
<div class="a" style="left:-0.40px;top:176.40px;width:292.00px;height:400.00px;background:#f1f1f3"></div>
<div class="a" style="left:10.30px;top:157.93px;font-size:8px;line-height:8px;font-weight:700;color:#444;letter-spacing:.4px">LAST 7 DAYS</div>
<div class="a" style="left:4.10px;top:184.10px;width:136.80px;height:193.20px;background:#fff;border-radius:3px"></div>
<div class="a" style="left:149.00px;top:184.10px;width:136.00px;height:193.20px;background:#fff;border-radius:3px"></div>
<div class="a" style="left:4.10px;top:385.30px;width:136.90px;height:185.00px;background:#fff;border-radius:3px"></div>
<div class="a" style="left:148.60px;top:385.30px;width:136.30px;height:185.00px;background:#fff;border-radius:3px"></div>
<div class="a" style="left:16.20px;top:198.94px;font-size:12px;line-height:12px;font-weight:700;color:#222;">Outdoor Living Sp...</div>
<div class="a" style="left:16.20px;top:217.83px;font-size:11.3px;line-height:11.3px;font-weight:400;color:#808080;">A curated selection of</div>
<div class="a" style="left:16.20px;top:232.93px;font-size:11.3px;line-height:11.3px;font-weight:400;color:#808080;">available listings</div>
<div class="a" style="left:16.20px;top:248.03px;font-size:11.3px;line-height:11.3px;font-weight:400;color:#808080;">awaits your explorati...</div>
<div class="a" style="left:16.10px;top:273.20px;width:33.80px;height:14.00px;background:#f3e8fc;border-radius:3px"></div>
<svg class="a" style="left:19.60px;top:275.90px;" width="9" height="9" viewBox="0 0 9 9"><circle cx="4.5" cy="4.5" r="4.5" fill="#a05be6"/><path d="M2.4 4.6l1.4 1.4 2.8-2.8" stroke="#fff" stroke-width="1.1" fill="none"/></svg>
<div class="a" style="left:32.60px;top:275.53px;font-size:10px;line-height:10px;font-weight:400;color:#444;">0/2</div>
<div class="a" style="left:53.40px;top:273.20px;width:40.40px;height:14.00px;background:#eeeeee;border-radius:3px"></div>
<div class="a" style="left:56.40px;top:275.53px;font-size:10px;line-height:10px;font-weight:400;color:#555;">Outdoor</div>
<div class="a" style="left:99.10px;top:275.53px;font-size:10px;line-height:10px;font-weight:400;color:#888;">+1</div>
<svg class="a" style="left:16.10px;top:293.90px;overflow:hidden;border-radius:2px" width="51.2" height="51.2" viewBox="0 0 62 62"><defs><filter id="bl4" x="-5%" y="-5%" width="110%" height="110%"><feGaussianBlur stdDeviation="0.9"/></filter></defs><g filter="url(#bl4)"><rect width="62" height="62" fill="#3f8aa6"/><rect width="62" height="18" fill="#ddd0cc"/><rect width="62" height="8" fill="#b8c8d8"/><rect x="10" y="12" width="52" height="6" fill="#e6d2c4"/><rect x="0" y="18" width="62" height="6" fill="#6a9ab0"/><path d="M0 14L4 12 10 16 16 20 20 26 22 34 20 44 0 46Z" fill="#a08262"/><path d="M0 30L14 32 18 40 10 46 0 44Z" fill="#c07a70"/><path d="M28 30L30 22 35 20 38 24 37 30Z" fill="#6a5848"/><path d="M38 30L40 24 43 24 45 30Z" fill="#6a5a4a"/><path d="M44 28L47 24 52 25 54 28Z" fill="#5a5048"/><rect x="20" y="26" width="42" height="20" fill="#2e86a8" opacity=".7"/><path d="M0 42L14 44 28 46 44 44 62 46V62H0Z" fill="#3f6e36"/><path d="M30 46L46 44 56 50 40 54Z" fill="#6a9a4a"/></g></svg>
<div class="a" style="left:16.20px;top:354.30px;font-size:9.8px;line-height:9.8px;font-weight:400;color:#8a8a8a;">Just now</div>
<div class="a" style="left:160.30px;top:198.94px;font-size:12px;line-height:12px;font-weight:700;color:#222;">Property Listings</div>
<div class="a" style="left:160.30px;top:217.83px;font-size:11.3px;line-height:11.3px;font-weight:400;color:#808080;">A curated selection of</div>
<div class="a" style="left:160.30px;top:232.93px;font-size:11.3px;line-height:11.3px;font-weight:400;color:#808080;">available listings,</div>
<div class="a" style="left:160.30px;top:248.03px;font-size:11.3px;line-height:11.3px;font-weight:400;color:#808080;">separated by numbe...</div>
<div class="a" style="left:160.10px;top:273.20px;width:36.00px;height:14.00px;background:#eeeeee;border-radius:3px"></div>
<div class="a" style="left:163.10px;top:275.53px;font-size:10px;line-height:10px;font-weight:400;color:#555;">garden</div>
<svg class="a" style="left:160.10px;top:293.90px;overflow:hidden;border-radius:2px" width="51" height="51" viewBox="0 0 62 62"><defs><filter id="bl5" x="-5%" y="-5%" width="110%" height="110%"><feGaussianBlur stdDeviation="0.9"/></filter></defs><g filter="url(#bl5)"><rect width="62" height="62" fill="#9fbad0"/><path d="M0 0H44L40 8 34 12 26 10 18 14 8 12 4 16 0 15Z" fill="#2c3a42"/><path d="M0 16L62 4V9L0 20Z" fill="#2a2824"/><rect x="0" y="19" width="30" height="13" fill="#b78a55"/><rect x="2" y="20" width="6" height="11" fill="#d8b070"/><rect x="17" y="20" width="12" height="10" fill="#e0c080"/><rect x="11" y="20" width="2" height="12" fill="#3a3026"/><rect x="30" y="14" width="12" height="18" fill="#c4c7cb"/><rect x="42" y="10" width="20" height="22" fill="#b09a58"/><path d="M48 12H62V34H52Z" fill="#7a8a48"/><rect x="0" y="31" width="62" height="4" fill="#2e2a26"/><rect x="0" y="35" width="32" height="16" fill="#d4d4d2"/><rect x="10" y="35" width="3" height="16" fill="#b8b0a0"/><rect x="32" y="35" width="8" height="14" fill="#b07a44"/><rect x="40" y="35" width="22" height="20" fill="#5c5a40"/><rect x="40" y="52" width="22" height="10" fill="#8a8274"/><path d="M0 62V50C6 47 14 46 22 48 30 46 40 48 46 52V62Z" fill="#4a7a3c"/></g></svg>
<div class="a" style="left:160.30px;top:354.30px;font-size:9.8px;line-height:9.8px;font-weight:400;color:#8a8a8a;">Yesterday</div>
<div class="a" style="left:16.20px;top:400.04px;font-size:12px;line-height:12px;font-weight:700;color:#222;">Dog Sitti...</div>
<div class="a" style="left:16.20px;top:418.63px;font-size:11.3px;line-height:11.3px;font-weight:400;color:#808080;">Food: Feed twice per</div>
<div class="a" style="left:16.20px;top:433.93px;font-size:11.3px;line-height:11.3px;font-weight:400;color:#808080;">day. Space..</div>
<div class="a" style="left:16.10px;top:456.90px;width:84.00px;height:14.90px;background:#e7eafc;border-radius:3px"></div>
<svg class="a" style="left:20.10px;top:460.20px;" width="8" height="9" viewBox="0 0 8 9"><path d="M4 .5a2.7 2.7 0 0 1 2.7 2.7v2.4l.9 1.4H.4l.9-1.4V3.2A2.7 2.7 0 0 1 4 .5z M2.8 7.8a1.2 1.2 0 0 0 2.4 0z" fill="#5b67e0"/></svg>
<div class="a" style="left:32.10px;top:459.73px;font-size:10px;line-height:10px;font-weight:400;color:#444;">May 7, 1:00 PM</div>
<div class="a" style="left:16.10px;top:474.90px;width:23.50px;height:14.80px;background:#eeeeee;border-radius:3px"></div>
<div class="a" style="left:18.60px;top:477.44px;font-size:10px;line-height:10px;font-weight:400;color:#555;">Luis</div>
<div class="a" style="left:44.40px;top:477.44px;font-size:10px;line-height:10px;font-weight:400;color:#888;">+1</div>
<svg class="a" style="left:16.10px;top:496.00px;overflow:hidden;border-radius:2px" width="51.4" height="51.4" viewBox="0 0 62 62"><defs><filter id="bl6" x="-5%" y="-5%" width="110%" height="110%"><feGaussianBlur stdDeviation="0.9"/></filter></defs><g filter="url(#bl6)"><rect width="62" height="62" fill="#6a5646"/><path d="M0 20L40 62H28L0 34Z" fill="#7a6450"/><path d="M20 0H34L62 30V44Z" fill="#54443a"/><path d="M0 0H16L0 14Z" fill="#cfcfcf"/><ellipse cx="18" cy="30" rx="6" ry="10" fill="#b08052"/><ellipse cx="43" cy="28" rx="6" ry="10" fill="#b08052"/><ellipse cx="31" cy="23" rx="14" ry="13" fill="#c99a62"/><ellipse cx="30" cy="18" rx="10" ry="7" fill="#dcb47e"/><ellipse cx="32" cy="45" rx="10" ry="14" fill="#c39462"/><ellipse cx="39" cy="40" rx="4" ry="7" fill="#ddd4c4"/><circle cx="26" cy="24" r="1.6" fill="#3a2a1e"/><circle cx="36" cy="23" r="1.6" fill="#3a2a1e"/><circle cx="31" cy="30" r="2" fill="#3a2a1e"/><ellipse cx="32" cy="59" rx="6" ry="4" fill="#3a2e26"/></g></svg>
<div class="a" style="left:16.20px;top:555.90px;font-size:9.8px;line-height:9.8px;font-weight:400;color:#8a8a8a;">Yesterday</div>
<div class="a" style="left:160.30px;top:400.04px;font-size:12px;line-height:12px;font-weight:700;color:#222;">To-Do List</div>
<div class="a" style="left:160.30px;top:418.63px;font-size:11.3px;line-height:11.3px;font-weight:400;color:#808080;">Prep for client meeting</div>
<div class="a" style="left:160.30px;top:433.63px;font-size:11.3px;line-height:11.3px;font-weight:400;color:#808080;">and walkthrough Send</div>
<div class="a" style="left:160.30px;top:448.63px;font-size:11.3px;line-height:11.3px;font-weight:400;color:#808080;">out client survey</div>
<div class="a" style="left:160.30px;top:463.63px;font-size:11.3px;line-height:11.3px;font-weight:400;color:#808080;">before your trip Revise</div>
<div class="a" style="left:160.30px;top:478.63px;font-size:11.3px;line-height:11.3px;font-weight:400;color:#808080;">contract</div>
<div class="a" style="left:160.30px;top:555.90px;font-size:9.8px;line-height:9.8px;font-weight:400;color:#8a8a8a;">Yesterday</div>
<div class="a" style="left:-0.40px;top:565.20px;width:292.00px;height:62.00px;background:#f2f2f2"></div>
<div class="a" style="left:111.90px;top:550.40px;width:66.80px;height:30.10px;background:#16a937;border-radius:6px"></div>
<svg class="a" style="left:124.10px;top:559.70px;" width="12" height="12" viewBox="0 0 12 12"><path d="M6 .5v11M.5 6h11" stroke="#fff" stroke-width="1.6" stroke-linecap="round"/></svg>
<div class="a" style="left:144.10px;top:560.07px;font-size:10.9px;line-height:10.9px;font-weight:700;color:#fff;">New</div>
<svg class="a" style="left:26.40px;top:580.20px;" width="16" height="12" viewBox="0 0 16 12"><path d="M.5 1h15M.5 6h15M.5 11h15" stroke="#222" stroke-width="1.5"/></svg>
<svg class="a" style="left:246.80px;top:578.00px;" width="18" height="18" viewBox="0 0 18 18"><circle cx="7.2" cy="7.2" r="6" fill="none" stroke="#222" stroke-width="1.6"/><path d="M11.6 11.6L17 17" stroke="#222" stroke-width="1.8" stroke-linecap="round"/></svg>
<div class="a" style="left:94.90px;top:623.30px;width:100.00px;height:3.50px;background:#111;border-radius:2px"></div>
</div>
</body></html>
